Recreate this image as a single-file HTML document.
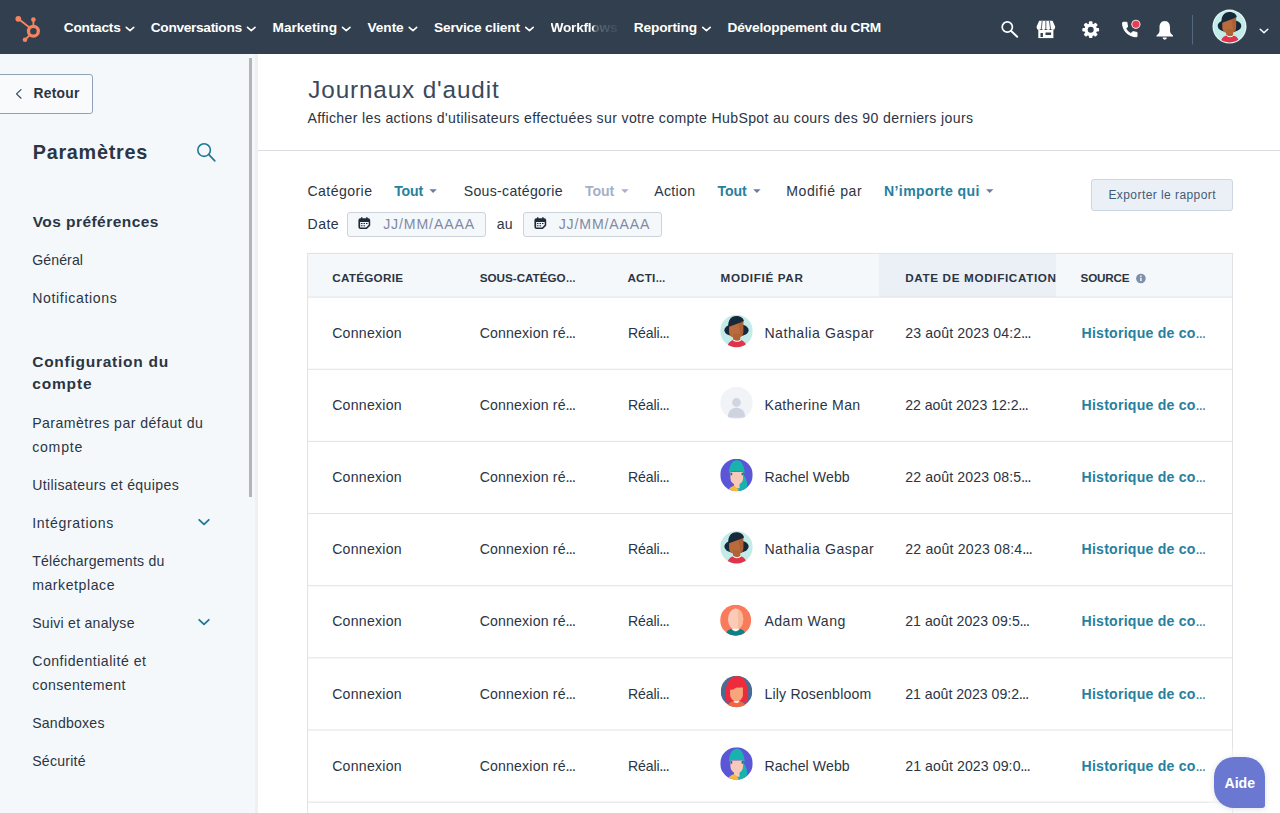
<!DOCTYPE html>
<html lang="fr"><head><meta charset="utf-8"><title>Journaux d'audit</title>
<style>
html,body{margin:0;padding:0;}
body{width:1280px;height:813px;overflow:hidden;position:relative;background:#fff;font-family:'Liberation Sans',sans-serif;}
.txt span{position:absolute;white-space:pre;line-height:normal;}
.abs{position:absolute;}
#nav{left:0;top:0;width:1280px;height:54px;background:#313f4e;}
#side{left:0;top:54px;width:255px;height:759px;background:#f5f8fa;}
#sideedge{left:255px;top:54px;width:3px;height:759px;background:#eef0f2;}
#scroll{left:249px;top:58px;width:3px;height:439px;background:#b5b5b5;}
#retour{left:-4px;top:74px;width:97px;height:40px;border:1px solid #8fa3b8;border-radius:3px;box-sizing:border-box;background:#f8fafc;}
#hline{left:258px;top:150px;width:1022px;height:1px;background:#dadde2;}
#export{left:1091px;top:179px;width:142px;height:32px;box-sizing:border-box;border:1px solid #cbd6e2;border-radius:3px;background:#eaf0f6;}
.inp{top:212px;width:139px;height:25px;box-sizing:border-box;border:1px solid #ccd3db;border-radius:3px;background:#f5f8fa;}
#thead{left:308px;top:254px;width:924px;height:43px;background:#f5f8fa;}
#thsel{left:879px;top:254px;width:177px;height:43px;background:#eaf0f6;}
#aide{left:1214px;top:757px;width:51px;height:51px;background:#6a78d1;border-radius:20px 20px 3px 20px;box-shadow:0 1px 6px rgba(45,62,80,.15),0 0 10px 5px rgba(255,255,255,.85);}
svg{position:absolute;overflow:visible;}
.txt span i{font-style:normal;font-size:10px;letter-spacing:0;font-weight:700;}
#wf{-webkit-mask-image:linear-gradient(90deg,#000 0,#000 63%,rgba(0,0,0,.22) 68%,rgba(0,0,0,.07) 100%);mask-image:linear-gradient(90deg,#000 0,#000 63%,rgba(0,0,0,.22) 68%,rgba(0,0,0,.07) 100%);}
#ico{z-index:1;}
#aide{z-index:2;}
.txt{position:absolute;left:0;top:0;z-index:3;}

</style></head>
<body>
<div id="nav" class="abs"></div>
<div id="side" class="abs"></div>
<div id="sideedge" class="abs"></div>
<div id="scroll" class="abs"></div>
<div id="retour" class="abs"></div>
<div id="hline" class="abs"></div>
<div id="export" class="abs"></div>
<div class="inp abs" style="left:347px"></div>
<div class="inp abs" style="left:523px"></div>
<div id="thead" class="abs"></div>
<div id="thsel" class="abs"></div>
<div id="aide" class="abs"></div>
<svg id="ico" width="1280" height="813" viewBox="0 0 1280 813" style="left:0;top:0">
<defs>
<clipPath id="cc"><circle cx="16" cy="16" r="16"/></clipPath>
<g id="av-nat" clip-path="url(#cc)">
 <rect width="32" height="32" fill="#c3ebe8"/>
 <ellipse cx="16" cy="15.300" rx="11.900" ry="6.500" fill="#17283a"/>
 <path d="M8.700 7h14v10.500a7 5.600 0 0 1-14 0z" fill="#b96b3c"/>
 <path d="M12.600 19h7.100v8h-7.100z" fill="#b06335"/>
 <path d="M17.500 7h5.200v10.500a7 5.600 0 0 1-3 4.600V19z" fill="#a0552c" opacity=".45"/>
 <path d="M7.900 12.300C7.400 5.600 10.500 1.300 15.800 1.300c4.700 0 7.600 2.600 7.500 5.300L8.700 12z" fill="#17283a"/>
 <path d="M7 33c0-5 3.500-7.600 6-8 1.500 1.600 5.500 1.600 7 0 2.500.400 6 3 6 8z" fill="#e0334c"/>
 <path d="M12.800 24.800c1.800 2 5.600 2 7.400 0" fill="none" stroke="#fff" stroke-width="1"/>
</g>
<g id="av-rach" clip-path="url(#cc)">
 <rect width="32" height="32" fill="#5b56d8"/>
 <path d="M20.500 12c3 4 6.500 9 6 14-.5 4-4 6.500-9 6.500l-1-5z" fill="#19b3ae"/>
 <path d="M10 13h12.500v6a6.250 6.500 0 0 1-12.500 0z" fill="#f8c9b8"/>
 <path d="M13.500 22h5.500v7h-5.500z" fill="#f8c9b8"/>
 <path d="M8.500 14.500c0-7 3-13 7.800-13s7.700 6 7.700 13c-1.500-1.500-3-2-3.500-2h-8.500c-1.200 0-2.500.700-3.500 2z" fill="#19b3ae"/>
 <path d="M10.200 13.600h1.600v2.600h-1.600zM21 13.600h1.600v2.600H21z" fill="#14807c"/>
 <path d="M8 33c0-4 2.500-6 6-6.500l3.500 3.500 1 3z" fill="#f6b93f"/>
</g>
</defs>
<g fill="#e0e2e6">
<rect x="307.100" y="252.900" width="926" height="1"/>
<rect x="307.100" y="252.900" width="1" height="570"/>
<rect x="1232" y="252.900" width="1" height="570"/>
<rect x="307.100" y="296.60" width="926" height="1"/>
<rect x="307.100" y="368.75" width="926" height="1"/>
<rect x="307.100" y="440.90" width="926" height="1"/>
<rect x="307.100" y="513.05" width="926" height="1"/>
<rect x="307.100" y="585.20" width="926" height="1"/>
<rect x="307.100" y="657.35" width="926" height="1"/>
<rect x="307.100" y="729.50" width="926" height="1"/>
<rect x="307.100" y="801.65" width="926" height="1"/>
</g>
<g fill="#f5845f" stroke="#f5845f" stroke-linecap="round"><circle cx="33.4" cy="31.2" r="4.900" fill="none" stroke-width="3.300"/><circle cx="18.300" cy="18.800" r="2.900" stroke="none"/><line x1="18.300" y1="18.800" x2="29.500" y2="27.600" stroke-width="1.900"/><circle cx="33.4" cy="19.600" r="2.300" stroke="none"/><line x1="33.4" y1="19.600" x2="33.4" y2="26" stroke-width="1.800"/><circle cx="25" cy="39.800" r="2.300" stroke="none"/><line x1="25" y1="39.800" x2="29.800" y2="35" stroke-width="1.800"/></g>
<polyline points="126.25,27.400 130.00,30.700 133.75,27.400" fill="none" stroke="#fff" stroke-width="1.600" stroke-linecap="round" stroke-linejoin="round"/>
<polyline points="247.50,27.400 251.25,30.700 255.00,27.400" fill="none" stroke="#fff" stroke-width="1.600" stroke-linecap="round" stroke-linejoin="round"/>
<polyline points="342.50,27.400 346.25,30.700 350.00,27.400" fill="none" stroke="#fff" stroke-width="1.600" stroke-linecap="round" stroke-linejoin="round"/>
<polyline points="409.20,27.400 412.95,30.700 416.70,27.400" fill="none" stroke="#fff" stroke-width="1.600" stroke-linecap="round" stroke-linejoin="round"/>
<polyline points="525.70,27.400 529.45,30.700 533.20,27.400" fill="none" stroke="#fff" stroke-width="1.600" stroke-linecap="round" stroke-linejoin="round"/>
<polyline points="702.70,27.400 706.45,30.700 710.20,27.400" fill="none" stroke="#fff" stroke-width="1.600" stroke-linecap="round" stroke-linejoin="round"/>
<g fill="none" stroke="#fff" stroke-linecap="round"><circle cx="1007.300" cy="27" r="5.100" stroke-width="1.700"/><line x1="1011.200" y1="31" x2="1017.200" y2="36.800" stroke-width="1.900"/></g>
<g transform="translate(1036.600,20.800)"><path d="M2.600 0h13.300l2.600 5.800v1a2.310 2.300 0 0 1-4.620 0 2.310 2.300 0 0 1-4.620 0 2.310 2.300 0 0 1-4.620 0 2.310 2.300 0 0 1-4.620 0v-1z" fill="#fff"/><path d="M5.600 0.200L4.700 7.500M9.250 0.200V7.500M12.900 0.200l.9 7.300" stroke="#313f4e" stroke-width=".8" fill="none"/><path d="M1.700 9.200h15.100v8.100H1.700z" fill="#fff"/><path d="M3.900 12.200h2.400v3.900H3.900zM8.900 11.600h5.600v2.700H8.900z" fill="#313f4e"/></g>
<g fill="#fff"><rect x="1088.90" y="21.30" width="3.600" height="4.500" rx="1" transform="rotate(0 1090.7 29.7)"/><rect x="1088.90" y="21.30" width="3.600" height="4.500" rx="1" transform="rotate(45 1090.7 29.7)"/><rect x="1088.90" y="21.30" width="3.600" height="4.500" rx="1" transform="rotate(90 1090.7 29.7)"/><rect x="1088.90" y="21.30" width="3.600" height="4.500" rx="1" transform="rotate(135 1090.7 29.7)"/><rect x="1088.90" y="21.30" width="3.600" height="4.500" rx="1" transform="rotate(180 1090.7 29.7)"/><rect x="1088.90" y="21.30" width="3.600" height="4.500" rx="1" transform="rotate(225 1090.7 29.7)"/><rect x="1088.90" y="21.30" width="3.600" height="4.500" rx="1" transform="rotate(270 1090.7 29.7)"/><rect x="1088.90" y="21.30" width="3.600" height="4.500" rx="1" transform="rotate(315 1090.7 29.7)"/><circle cx="1090.7" cy="29.7" r="6.300"/></g><circle cx="1090.7" cy="29.7" r="3" fill="#313f4e"/>
<path transform="translate(1120.20,19.90) scale(0.800)" fill="#fff" stroke="#fff" stroke-width="1.300" stroke-linejoin="round" d="M6.620 10.790c1.440 2.830 3.760 5.140 6.590 6.590l2.200-2.200c.27-.27.67-.36 1.020-.24 1.120.37 2.330.57 3.570.57.550 0 1 .45 1 1V20c0 .55-.45 1-1 1-9.390 0-17-7.610-17-17 0-.55.45-1 1-1h3.500c.55 0 1 .45 1 1 0 1.250.2 2.450.57 3.570.11.35.03.74-.25 1.020l-2.200 2.200z"/>
<circle cx="1135.900" cy="24.300" r="5.300" fill="#313f4e"/><circle cx="1135.900" cy="24.300" r="4.600" fill="#f6d5d8"/><circle cx="1135.900" cy="24.300" r="3.500" fill="#e33e52"/>
<g transform="translate(1156.500,21)" fill="#fff"><path d="M8.250 0C4.400 0 3 3.200 3 6.500V10c0 2-1.500 3-3 4.500v.9h16.500v-.9c-1.500-1.500-3-2.500-3-4.500V6.500C13.500 3.200 12.100 0 8.250 0z"/><path d="M6.100 16.600a2.150 2.150 0 0 0 4.300 0z"/></g>
<line x1="1192.500" y1="15" x2="1192.500" y2="44.500" stroke="#55687d" stroke-width="1"/>
<circle cx="1229.500" cy="26.600" r="17" fill="#e4f6f6"/>
<use href="#av-nat" transform="translate(1213.700,10.800) scale(.9875)"/>
<polyline points="1260.200,29.200 1264,32.800 1267.800,29.200" fill="none" stroke="#fff" stroke-width="1.500" stroke-linecap="round" stroke-linejoin="round"/>
<polyline points="21,89.600 16.500,93.900 21,98.200" fill="none" stroke="#33475b" stroke-width="1.200" stroke-linecap="round" stroke-linejoin="round"/>
<g fill="none" stroke="#1c7a96" stroke-linecap="round"><circle cx="204.100" cy="150.100" r="6.300" stroke-width="1.600"/><line x1="208.900" y1="154.700" x2="214.800" y2="160.900" stroke-width="1.700"/></g>
<polyline points="199.200,519.8 204,524.4 208.800,519.8" fill="none" stroke="#1c7a96" stroke-width="1.800" stroke-linecap="round" stroke-linejoin="round"/>
<polyline points="199.200,619.8 204,624.4 208.800,619.8" fill="none" stroke="#1c7a96" stroke-width="1.800" stroke-linecap="round" stroke-linejoin="round"/>
<path d="M429.4 189.200h7.400l-3.700 3.800z" fill="#6b7aa5"/>
<path d="M621.2 189.200h7.400l-3.700 3.800z" fill="#a9add0"/>
<path d="M753.2 189.200h7.400l-3.700 3.800z" fill="#6b7aa5"/>
<path d="M986 189.200h7.400l-3.700 3.800z" fill="#6b7aa5"/>
<g transform="translate(358.4,217)"><path d="M2 1.300h7.800a2 2 0 0 1 2 2v5.400l-3.400 3.400H2a2 2 0 0 1-2-2V3.300a2 2 0 0 1 2-2z" fill="#1e2c3c"/><rect x="2.600" y="0" width="1.400" height="2.500" rx=".7" fill="#1e2c3c"/><rect x="7.800" y="0" width="1.400" height="2.500" rx=".7" fill="#1e2c3c"/><path d="M1.700 5h8.600v3l-2.600 2.600H1.700z" fill="#eef2f6"/><path d="M2.600 6.100h1.500v1h-1.500zM5.100 6.100h1.500v1H5.100zM7.600 6.100h1.500v1H7.600zM2.600 8.300h1.500v1h-1.500zM5.100 8.300h1.500v1H5.100z" fill="#1e2c3c"/></g>
<g transform="translate(534.4,217)"><path d="M2 1.300h7.800a2 2 0 0 1 2 2v5.400l-3.400 3.400H2a2 2 0 0 1-2-2V3.300a2 2 0 0 1 2-2z" fill="#1e2c3c"/><rect x="2.600" y="0" width="1.400" height="2.500" rx=".7" fill="#1e2c3c"/><rect x="7.800" y="0" width="1.400" height="2.500" rx=".7" fill="#1e2c3c"/><path d="M1.700 5h8.600v3l-2.600 2.600H1.700z" fill="#eef2f6"/><path d="M2.600 6.100h1.500v1h-1.500zM5.100 6.100h1.500v1H5.100zM7.600 6.100h1.500v1H7.600zM2.600 8.300h1.500v1h-1.500zM5.100 8.300h1.500v1H5.100z" fill="#1e2c3c"/></g>
<circle cx="1140.900" cy="278.500" r="4.800" fill="#7b90ab"/><rect x="1140.200" y="277.700" width="1.400" height="3.400" fill="#fff"/><rect x="1140.200" y="275.500" width="1.400" height="1.400" fill="#fff"/>
<use href="#av-nat" transform="translate(720.25,314.65) scale(1.0156)"/>
<g transform="translate(720.25,386.75) scale(1.0156)" clip-path="url(#cc)"><rect width="32" height="32" fill="#f1f3f7"/><circle cx="16" cy="15.500" r="4.300" fill="#d0d5e1"/><path d="M7.500 30c0-5.500 3.500-9.200 8.500-9.200s8.500 3.700 8.500 9.200c0 .8-17 .8-17 0z" fill="#cdd3df"/></g>
<use href="#av-rach" transform="translate(720.25,458.85) scale(1.0156)"/>
<use href="#av-nat" transform="translate(720.25,530.95) scale(1.0156)"/>
<g transform="translate(720.15,604.65) scale(0.9688)" clip-path="url(#cc)"><rect width="32" height="32" fill="#f87b5b"/><ellipse cx="16" cy="15" rx="7.900" ry="11" fill="#fccbb8"/><path d="M18.500 4.600a7.900 11 0 0 1 0 20.800z" fill="#f9b492" opacity=".8"/><path d="M5 34c0-6 4-8.500 7-9 2 2.200 6 2.200 8 0 3 .5 7 3 7 9z" fill="#0d8081"/><path d="M12 25c2 2.800 6 2.800 8 0" fill="#fff" stroke="#fff" stroke-width=".6"/></g>
<g transform="translate(720.75,675.65) scale(0.9844)" clip-path="url(#cc)"><rect width="32" height="32" fill="#4a6b94"/><path d="M5.500 27c-1-7-1-14 1-19 2-5 6-7.500 10-7.500s8 2.500 9.500 7.500c1.500 5 1.500 12 1 19z" fill="#ee2b3c"/><path d="M9.500 12h13v7.500a6.500 6.500 0 0 1-13 0z" fill="#f7a57c"/><path d="M13.300 22h5.400v5h-5.400z" fill="#f7a57c"/><path d="M8.500 14c0-5 3-9 8-9 4 0 6.500 3 7 6-3 .5-5 1-7.500.500-2 2.500-5 3.500-7.500 2.500z" fill="#ee2b3c"/><path d="M6 34c0-5 3.500-7.500 7-8 1.500 1.800 4.500 1.800 6 0 3.500.500 7 3 7 8z" fill="#f2673f"/><path d="M13 26c1.500 2 4.500 2 6 0" fill="#fff" stroke="#fff" stroke-width=".5"/></g>
<use href="#av-rach" transform="translate(720.25,747.25) scale(1.0156)"/>
</svg>
<div class="txt">
<span  style="left:63.8px;top:20.0px;font-size:13.7px;letter-spacing:-0.223px;color:#ffffff;font-weight:700;">Contacts</span>
<span  style="left:150.8px;top:20.0px;font-size:13.7px;letter-spacing:-0.319px;color:#ffffff;font-weight:700;">Conversations</span>
<span  style="left:272.5px;top:20.0px;font-size:13.7px;letter-spacing:-0.020px;color:#ffffff;font-weight:700;">Marketing</span>
<span  style="left:367.5px;top:20.0px;font-size:13.7px;letter-spacing:-0.070px;color:#ffffff;font-weight:700;">Vente</span>
<span  style="left:434.0px;top:20.0px;font-size:13.7px;letter-spacing:-0.174px;color:#ffffff;font-weight:700;">Service client</span>
<span  style="left:633.8px;top:20.0px;font-size:13.7px;letter-spacing:-0.174px;color:#ffffff;font-weight:700;">Reporting</span>
<span  style="left:727.5px;top:20.0px;font-size:13.7px;letter-spacing:-0.193px;color:#ffffff;font-weight:700;">Développement du CRM</span>
<span id="wf" style="left:550.5px;top:20.0px;font-size:13.7px;letter-spacing:-0.244px;color:#ffffff;font-weight:700;">Workflows</span>
<span  style="left:33.4px;top:86.0px;font-size:13.8px;letter-spacing:0.306px;color:#2b3544;font-weight:700;">Retour</span>
<span  style="left:32.7px;top:141.0px;font-size:19.8px;letter-spacing:0.747px;color:#2b3544;font-weight:700;">Paramètres</span>
<span  style="left:32.7px;top:213.0px;font-size:15.5px;letter-spacing:0.445px;color:#2b3544;font-weight:700;">Vos préférences</span>
<span  style="left:32.2px;top:252.0px;font-size:14.1px;letter-spacing:0.110px;color:#2b3544;">Général</span>
<span  style="left:32.2px;top:290.0px;font-size:14.1px;letter-spacing:0.653px;color:#2b3544;">Notifications</span>
<span  style="left:32.2px;top:353.0px;font-size:15.5px;letter-spacing:0.744px;color:#2b3544;font-weight:700;">Configuration du</span>
<span  style="left:32.2px;top:375.0px;font-size:15.5px;letter-spacing:0.855px;color:#2b3544;font-weight:700;">compte</span>
<span  style="left:32.2px;top:415.0px;font-size:14.1px;letter-spacing:0.468px;color:#2b3544;">Paramètres par défaut du</span>
<span  style="left:32.2px;top:439.0px;font-size:14.1px;letter-spacing:0.776px;color:#2b3544;">compte</span>
<span  style="left:32.2px;top:477.0px;font-size:14.1px;letter-spacing:0.356px;color:#2b3544;">Utilisateurs et équipes</span>
<span  style="left:32.2px;top:515.0px;font-size:14.1px;letter-spacing:0.677px;color:#2b3544;">Intégrations</span>
<span  style="left:32.2px;top:553.0px;font-size:14.1px;letter-spacing:0.213px;color:#2b3544;">Téléchargements du</span>
<span  style="left:32.2px;top:577.0px;font-size:14.1px;letter-spacing:0.553px;color:#2b3544;">marketplace</span>
<span  style="left:32.2px;top:615.0px;font-size:14.1px;letter-spacing:0.239px;color:#2b3544;">Suivi et analyse</span>
<span  style="left:32.2px;top:653.0px;font-size:14.1px;letter-spacing:0.518px;color:#2b3544;">Confidentialité et</span>
<span  style="left:32.2px;top:677.0px;font-size:14.1px;letter-spacing:0.432px;color:#2b3544;">consentement</span>
<span  style="left:32.2px;top:715.0px;font-size:14.1px;letter-spacing:0.221px;color:#2b3544;">Sandboxes</span>
<span  style="left:32.2px;top:753.0px;font-size:14.1px;letter-spacing:0.228px;color:#2b3544;">Sécurité</span>
<span class="ttl" style="left:308.3px;top:76.0px;font-size:24.3px;letter-spacing:0.857px;color:#3a4a5c;">Journaux d&#x27;audit</span>
<span  style="left:307.4px;top:110.0px;font-size:14.1px;letter-spacing:0.356px;color:#2b3544;">Afficher les actions d&#x27;utilisateurs effectuées sur votre compte HubSpot au cours des 90 derniers jours</span>
<span  style="left:307.5px;top:183.0px;font-size:14.1px;letter-spacing:0.422px;color:#2b3544;">Catégorie</span>
<span  style="left:394.2px;top:183.0px;font-size:14.1px;letter-spacing:-0.128px;color:#27809e;font-weight:700;">Tout</span>
<span  style="left:463.7px;top:183.0px;font-size:14.1px;letter-spacing:0.308px;color:#2b3544;">Sous-catégorie</span>
<span  style="left:585.0px;top:183.0px;font-size:14.1px;letter-spacing:-0.095px;color:#a3b1c6;font-weight:700;">Tout</span>
<span  style="left:654.2px;top:183.0px;font-size:14.1px;letter-spacing:0.326px;color:#2b3544;">Action</span>
<span  style="left:717.5px;top:183.0px;font-size:14.1px;letter-spacing:-0.095px;color:#27809e;font-weight:700;">Tout</span>
<span  style="left:786.2px;top:183.0px;font-size:14.1px;letter-spacing:0.578px;color:#2b3544;">Modifié par</span>
<span  style="left:884.0px;top:183.0px;font-size:14.1px;letter-spacing:0.381px;color:#27809e;font-weight:700;">N’importe qui</span>
<span  style="left:1108.4px;top:188.0px;font-size:12px;letter-spacing:0.434px;color:#425b76;">Exporter le rapport</span>
<span  style="left:307.5px;top:216.0px;font-size:14.1px;letter-spacing:0.473px;color:#2b3544;">Date</span>
<span  style="left:383.2px;top:216.0px;font-size:14.1px;letter-spacing:0.887px;color:#7f8aa6;">JJ/MM/AAAA</span>
<span  style="left:496.7px;top:216.0px;font-size:14.1px;letter-spacing:0.113px;color:#2b3544;">au</span>
<span  style="left:558.7px;top:216.0px;font-size:14.1px;letter-spacing:0.865px;color:#7f8aa6;">JJ/MM/AAAA</span>
<span  style="left:332.2px;top:271.0px;font-size:11.7px;letter-spacing:0.272px;color:#2b3544;font-weight:700;">CATÉGORIE</span>
<span  style="left:479.7px;top:271.0px;font-size:11.7px;letter-spacing:-0.014px;color:#2b3544;font-weight:700;">SOUS-CATÉGO<i>…</i></span>
<span  style="left:627.5px;top:271.0px;font-size:11.7px;letter-spacing:0.155px;color:#2b3544;font-weight:700;">ACTI<i>…</i></span>
<span  style="left:720.6px;top:271.0px;font-size:11.7px;letter-spacing:0.653px;color:#2b3544;font-weight:700;">MODIFIÉ PAR</span>
<span  style="left:905.2px;top:271.0px;font-size:11.7px;letter-spacing:0.647px;color:#2b3544;font-weight:700;">DATE DE MODIFICATION</span>
<span  style="left:1080.6px;top:271.0px;font-size:11.7px;letter-spacing:-0.203px;color:#2b3544;font-weight:700;">SOURCE</span>
<span  style="left:332.2px;top:325.0px;font-size:14.1px;letter-spacing:0.251px;color:#2b3544;">Connexion</span>
<span  style="left:479.7px;top:325.0px;font-size:14.1px;letter-spacing:0.180px;color:#2b3544;">Connexion ré<i>…</i></span>
<span  style="left:628.1px;top:325.0px;font-size:14.1px;letter-spacing:-0.155px;color:#2b3544;">Réali<i>…</i></span>
<span  style="left:764.4px;top:325.0px;font-size:14.1px;letter-spacing:0.540px;color:#2b3544;">Nathalia Gaspar</span>
<span  style="left:905.2px;top:325.0px;font-size:14.1px;letter-spacing:0.145px;color:#2b3544;">23 août 2023 04:2<i>…</i></span>
<span  style="left:1081.5px;top:325.0px;font-size:14.1px;letter-spacing:0.236px;color:#27809e;font-weight:700;">Historique de co<i>…</i></span>
<span  style="left:332.2px;top:397.0px;font-size:14.1px;letter-spacing:0.251px;color:#2b3544;">Connexion</span>
<span  style="left:479.7px;top:397.0px;font-size:14.1px;letter-spacing:0.180px;color:#2b3544;">Connexion ré<i>…</i></span>
<span  style="left:628.1px;top:397.0px;font-size:14.1px;letter-spacing:-0.155px;color:#2b3544;">Réali<i>…</i></span>
<span  style="left:764.4px;top:397.0px;font-size:14.1px;letter-spacing:0.344px;color:#2b3544;">Katherine Man</span>
<span  style="left:905.2px;top:397.0px;font-size:14.1px;letter-spacing:-0.020px;color:#2b3544;">22 août 2023 12:2<i>…</i></span>
<span  style="left:1081.5px;top:397.0px;font-size:14.1px;letter-spacing:0.236px;color:#27809e;font-weight:700;">Historique de co<i>…</i></span>
<span  style="left:332.2px;top:469.0px;font-size:14.1px;letter-spacing:0.251px;color:#2b3544;">Connexion</span>
<span  style="left:479.7px;top:469.0px;font-size:14.1px;letter-spacing:0.180px;color:#2b3544;">Connexion ré<i>…</i></span>
<span  style="left:628.1px;top:469.0px;font-size:14.1px;letter-spacing:-0.155px;color:#2b3544;">Réali<i>…</i></span>
<span  style="left:764.4px;top:469.0px;font-size:14.1px;letter-spacing:0.094px;color:#2b3544;">Rachel Webb</span>
<span  style="left:905.2px;top:469.0px;font-size:14.1px;letter-spacing:0.145px;color:#2b3544;">22 août 2023 08:5<i>…</i></span>
<span  style="left:1081.5px;top:469.0px;font-size:14.1px;letter-spacing:0.236px;color:#27809e;font-weight:700;">Historique de co<i>…</i></span>
<span  style="left:332.2px;top:541.0px;font-size:14.1px;letter-spacing:0.251px;color:#2b3544;">Connexion</span>
<span  style="left:479.7px;top:541.0px;font-size:14.1px;letter-spacing:0.180px;color:#2b3544;">Connexion ré<i>…</i></span>
<span  style="left:628.1px;top:541.0px;font-size:14.1px;letter-spacing:-0.155px;color:#2b3544;">Réali<i>…</i></span>
<span  style="left:764.4px;top:541.0px;font-size:14.1px;letter-spacing:0.540px;color:#2b3544;">Nathalia Gaspar</span>
<span  style="left:905.2px;top:541.0px;font-size:14.1px;letter-spacing:0.209px;color:#2b3544;">22 août 2023 08:4<i>…</i></span>
<span  style="left:1081.5px;top:541.0px;font-size:14.1px;letter-spacing:0.236px;color:#27809e;font-weight:700;">Historique de co<i>…</i></span>
<span  style="left:332.2px;top:613.0px;font-size:14.1px;letter-spacing:0.251px;color:#2b3544;">Connexion</span>
<span  style="left:479.7px;top:613.0px;font-size:14.1px;letter-spacing:0.180px;color:#2b3544;">Connexion ré<i>…</i></span>
<span  style="left:628.1px;top:613.0px;font-size:14.1px;letter-spacing:-0.155px;color:#2b3544;">Réali<i>…</i></span>
<span  style="left:764.4px;top:613.0px;font-size:14.1px;letter-spacing:0.484px;color:#2b3544;">Adam Wang</span>
<span  style="left:905.2px;top:613.0px;font-size:14.1px;letter-spacing:0.056px;color:#2b3544;">21 août 2023 09:5<i>…</i></span>
<span  style="left:1081.5px;top:613.0px;font-size:14.1px;letter-spacing:0.236px;color:#27809e;font-weight:700;">Historique de co<i>…</i></span>
<span  style="left:332.2px;top:686.0px;font-size:14.1px;letter-spacing:0.251px;color:#2b3544;">Connexion</span>
<span  style="left:479.7px;top:686.0px;font-size:14.1px;letter-spacing:0.180px;color:#2b3544;">Connexion ré<i>…</i></span>
<span  style="left:628.1px;top:686.0px;font-size:14.1px;letter-spacing:-0.155px;color:#2b3544;">Réali<i>…</i></span>
<span  style="left:764.4px;top:686.0px;font-size:14.1px;letter-spacing:0.193px;color:#2b3544;">Lily Rosenbloom</span>
<span  style="left:905.2px;top:686.0px;font-size:14.1px;letter-spacing:0.015px;color:#2b3544;">21 août 2023 09:2<i>…</i></span>
<span  style="left:1081.5px;top:686.0px;font-size:14.1px;letter-spacing:0.236px;color:#27809e;font-weight:700;">Historique de co<i>…</i></span>
<span  style="left:332.2px;top:758.0px;font-size:14.1px;letter-spacing:0.251px;color:#2b3544;">Connexion</span>
<span  style="left:479.7px;top:758.0px;font-size:14.1px;letter-spacing:0.180px;color:#2b3544;">Connexion ré<i>…</i></span>
<span  style="left:628.1px;top:758.0px;font-size:14.1px;letter-spacing:-0.155px;color:#2b3544;">Réali<i>…</i></span>
<span  style="left:764.4px;top:758.0px;font-size:14.1px;letter-spacing:0.094px;color:#2b3544;">Rachel Webb</span>
<span  style="left:905.2px;top:758.0px;font-size:14.1px;letter-spacing:0.103px;color:#2b3544;">21 août 2023 09:0<i>…</i></span>
<span  style="left:1081.5px;top:758.0px;font-size:14.1px;letter-spacing:0.236px;color:#27809e;font-weight:700;">Historique de co<i>…</i></span>
<span  style="left:1224.5px;top:775.0px;font-size:14.1px;letter-spacing:-0.016px;color:#ffffff;font-weight:700;">Aide</span>
</div>
</body></html>
